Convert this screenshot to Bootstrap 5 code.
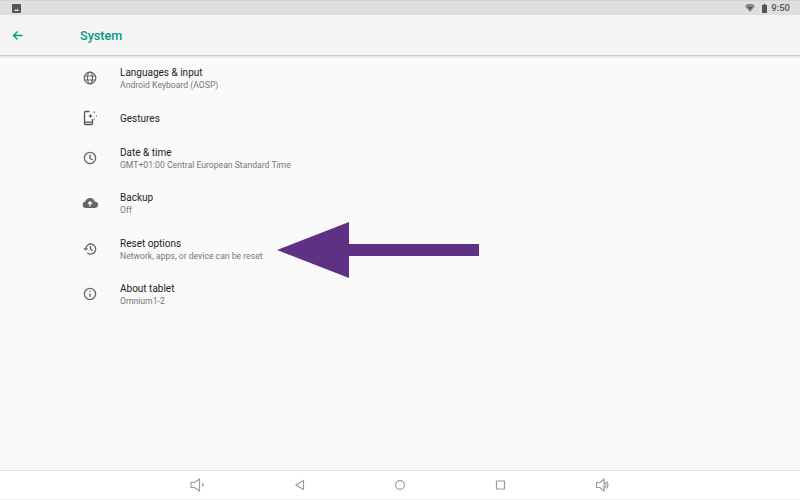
<!DOCTYPE html>
<html lang="en">
<head>
<meta charset="utf-8">
<title>System</title>
<link href="https://cdn.jsdelivr.net/npm/bootstrap@5.3.0/dist/css/bootstrap.min.css" rel="stylesheet">
<style>
html,body{height:100%;margin:0}
body{width:800px;height:500px;overflow:hidden;background:#fafafa;font-family:Roboto,"Liberation Sans",sans-serif;position:relative}
.sb{height:15px;background:#dfdfdf;padding:0 10px 0 12px;color:#555;font-size:9.5px;font-weight:500;border-top:1px solid #d4d4d4}
.sb-ic{gap:4px}
.sb-wf{margin-right:3px}
.ab{height:41px;background:#f5f5f5;border-bottom:1px solid #c9c9c9;box-shadow:0 1px 2px rgba(0,0,0,.12);padding-left:12px}
.ttl{margin-left:57px;margin-top:2px;color:#009a88;font-size:12.6px;font-weight:500;line-height:1}
.lst{flex:1 1 auto}
.rw{height:45.5px;padding-left:82px}
.rw.one{height:34.5px}
.rw svg{flex:0 0 16px;margin-right:22px;margin-top:-2px}
.t1{font-size:10px;line-height:13px;color:#222}
.t2{font-size:8.65px;line-height:13px;color:#777}
.nb{height:30px;background:#fff;border-top:1px solid #e2e2e2;border-bottom:1px solid #f0f0f0;padding:0 190px}
.arw{position:absolute;left:277px;top:222px}
</style>
</head>
<body class="d-flex flex-column">
<div class="sb d-flex align-items-center justify-content-between flex-shrink-0">
  <svg width="9" height="9" viewBox="0 0 9 9"><rect width="9" height="9" rx="1" fill="#555"/><path d="M2 7l1.500-2 1 1 1-1.500L7 7z" fill="#ddd"/></svg>
  <div class="sb-ic d-flex align-items-center">
    <svg class="sb-wf" width="10" height="8" viewBox="0 0 10 8"><path d="M0 2.200 2.200 0h5.600L10 2.200 5 8z" fill="#888"/><path d="M2.600 3h4.800L5 6z" fill="#555"/></svg>
    <svg width="5" height="9" viewBox="0 0 5 9"><path d="M1.500 0h2v1H5v8H0V1h1.500z" fill="#555"/></svg>
    <span>9:50</span>
  </div>
</div>
<div class="ab d-flex align-items-center flex-shrink-0">
  <svg width="11" height="11" viewBox="0 0 11 11"><path d="M10.500 5.500H1.500M5.500 1.500l-4 4 4 4" fill="none" stroke="#009a88" stroke-width="1.400"/></svg>
  <div class="ttl">System</div>
</div>
<div class="lst">
  <div class="rw d-flex align-items-center">
    <svg width="16" height="16" viewBox="0 0 16 16" fill="none" stroke="#666" stroke-width="1.200"><circle cx="8" cy="8" r="5.800"/><ellipse cx="8" cy="8" rx="2.500" ry="5.800"/><path d="M2.400 6h11.200M2.400 10h11.200"/></svg>
    <div><div class="t1">Languages &amp; input</div><div class="t2">Android Keyboard (AOSP)</div></div>
  </div>
  <div class="rw one d-flex align-items-center">
    <svg width="16" height="16" viewBox="0 0 16 16" fill="none" stroke="#555" stroke-width="1.300"><path d="M7.500 1.500H3.500a1 1 0 0 0-1 1v11a1 1 0 0 0 1 1h6a1 1 0 0 0 1-1v-4.500M2.500 12.200h8"/><path d="M8.500 3.800l.7 1.500 1.500.7-1.500.7-.7 1.500-.7-1.500L6.300 6l1.500-.7z" fill="#555" stroke="none"/><path d="M12.200 1.500v1.600M13.800 6h1.200M12.200 8.500v1" stroke-width="1.100"/></svg>
    <div class="t1">Gestures</div>
  </div>
  <div class="rw d-flex align-items-center">
    <svg width="16" height="16" viewBox="0 0 16 16" fill="none" stroke="#666" stroke-width="1.300"><circle cx="8" cy="8" r="5.600"/><path d="M8 4.500V8.300l2.800 1.700"/></svg>
    <div><div class="t1">Date &amp; time</div><div class="t2">GMT+01:00 Central European Standard Time</div></div>
  </div>
  <div class="rw d-flex align-items-center">
    <svg width="16" height="16" viewBox="0 0 16 16"><path d="M3.800 13a3.300 3.300 0 0 1-.6-6.500 5 5 0 0 1 9.500-.1 3.300 3.300 0 0 1 .1 6.600z" fill="#666"/><path d="M8 11.300V7M6.100 8.700 8 6.800l1.900 1.900" fill="none" stroke="#fafafa" stroke-width="1.300"/></svg>
    <div><div class="t1">Backup</div><div class="t2">Off</div></div>
  </div>
  <div class="rw d-flex align-items-center">
    <svg width="16" height="16" viewBox="0 0 16 16" fill="none" stroke="#666" stroke-width="1.300"><path d="M3.700 8a5 5 0 1 1 1.600 3.700"/><path d="M1.800 7.200 3.700 9l1.900-1.800" stroke-width="1.100"/><path d="M8.500 5v3.300l2.300 1.300"/></svg>
    <div><div class="t1">Reset options</div><div class="t2">Network, apps, or device can be reset</div></div>
  </div>
  <div class="rw d-flex align-items-center">
    <svg width="16" height="16" viewBox="0 0 16 16" fill="none" stroke="#666" stroke-width="1.300"><circle cx="8" cy="8" r="5.600"/><path d="M8 7.200v3.800M8 4.800v1.300"/></svg>
    <div><div class="t1">About tablet</div><div class="t2">Omnium1-2</div></div>
  </div>
</div>
<div class="nb d-flex align-items-center justify-content-between flex-shrink-0">
  <svg width="16" height="14" viewBox="0 0 16 14" fill="none" stroke="#999" stroke-width="1.100"><path d="M1 4.500h3.500L9.500 1v12L4.500 9.500H1z"/><path d="M12 5.500 13.500 7 12 8.500"/></svg>
  <svg width="12" height="12" viewBox="0 0 12 12" fill="none" stroke="#999" stroke-width="1.100"><path d="M9.500 1.500v9L2 6z"/></svg>
  <svg width="12" height="12" viewBox="0 0 12 12" fill="none" stroke="#999" stroke-width="1.100"><circle cx="6" cy="6" r="4.400"/></svg>
  <svg width="12" height="12" viewBox="0 0 12 12" fill="none" stroke="#999" stroke-width="1.200"><rect x="2.500" y="2" width="8" height="8" rx=".5"/></svg>
  <svg width="16" height="14" viewBox="0 0 16 14" fill="none" stroke="#999" stroke-width="1.100"><path d="M2.500 4.500h3.500L10 1v12L6 9.500H2.500z"/><path d="M10 4a3.200 3.200 0 0 1 0 6M12.500 3.500a5 5 0 0 1 0 7"/></svg>
</div>
<svg class="arw" width="203" height="56" viewBox="0 0 203 56"><path d="M0 28 72 0v22h130v12H72v22z" fill="#5f3185"/></svg>
</body>
</html>
